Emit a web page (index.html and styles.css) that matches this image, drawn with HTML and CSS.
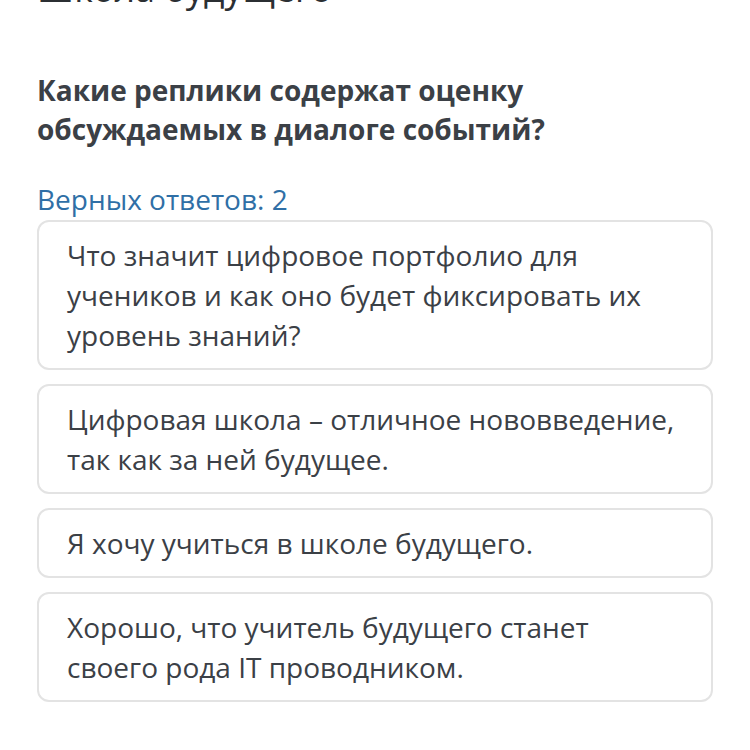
FILE: index.html
```html
<!DOCTYPE html>
<html lang="ru">
<head>
<meta charset="utf-8">
<link rel="stylesheet" href="styles.css">
</head>
<body>
<div class="page">
  <h1 class="title">Школа будущего</h1>
  <h2 class="question">Какие реплики содержат оценку обсуждаемых в диалоге событий?</h2>
  <div class="count">Верных ответов: 2</div>
  <div class="options">
    <div class="option">Что значит цифровое портфолио для учеников и как оно будет фиксировать их уровень знаний?</div>
    <div class="option">Цифровая школа – отличное нововведение, так как за ней будущее.</div>
    <div class="option">Я хочу учиться в школе будущего.</div>
    <div class="option">Хорошо, что учитель будущего станет своего рода IT проводником.</div>
  </div>
</div>
</body>
</html>
```

FILE: styles.css
```css
html, body {
  margin: 0;
  padding: 0;
  background: #ffffff;
}
body {
  font-family: "Open Sans", "Noto Sans", sans-serif;
  color: #3b4046;
}
.page {
  padding: 0 37px;
  width: 676px;
}
.title {
  margin: -35px 0 0 0;
  font-size: 36px;
  line-height: 48px;
  font-weight: 400;
  color: #2b2f33;
}
.question {
  margin: 58px 0 0 0;
  font-size: 28px;
  line-height: 39px;
  font-weight: 700;
  color: #3b4046;
  width: 560px;
}
.count {
  margin-top: 30px;
  font-size: 28px;
  line-height: 40px;
  color: #2f6fa6;
}
.options {
  margin-top: 1px;
  display: flex;
  flex-direction: column;
  gap: 14px;
}
.option {
  border: 2px solid #e3e3e3;
  border-radius: 12px;
  padding: 13px 28px;
  font-size: 28px;
  line-height: 40px;
  color: #3b4046;
}
```
